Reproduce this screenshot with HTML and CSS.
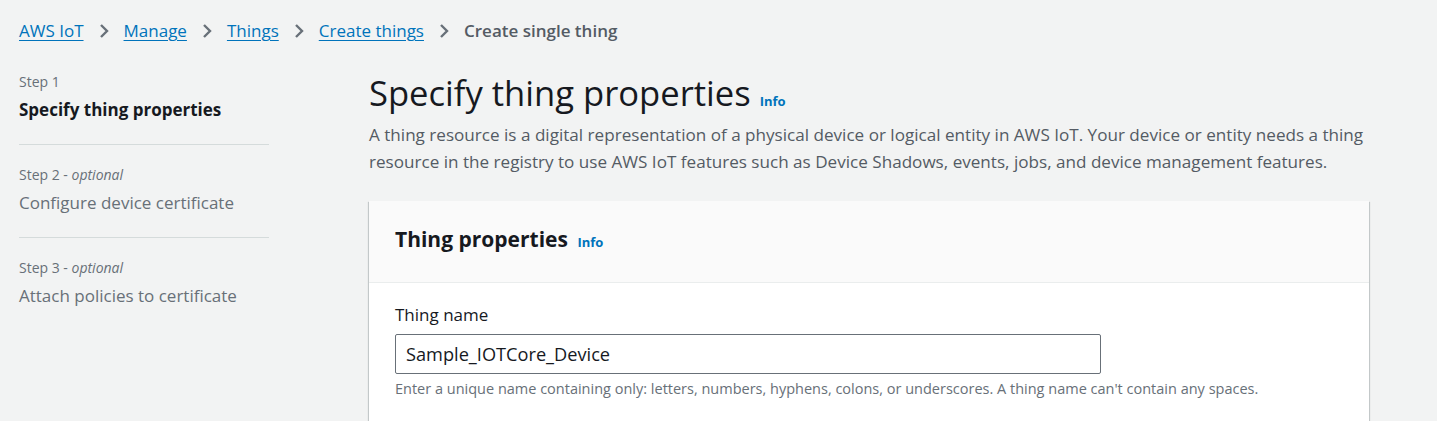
FILE: index.html
```html
<!DOCTYPE html>
<html>

<head>
  <title>Create single thing</title>
  <link rel="stylesheet" href="styles.css">
</head>

<body>
  <nav class="breadcrumbs">
    <a class="crumb-link" href="#">AWS IoT</a>
    <svg class="crumb-sep" viewBox="0 0 10 16" width="10" height="16"><path d="M2 2l6 6-6 6" fill="none" stroke="#687078" stroke-width="2.4"/></svg>
    <a class="crumb-link" href="#">Manage</a>
    <svg class="crumb-sep" viewBox="0 0 10 16" width="10" height="16"><path d="M2 2l6 6-6 6" fill="none" stroke="#687078" stroke-width="2.4"/></svg>
    <a class="crumb-link" href="#">Things</a>
    <svg class="crumb-sep" viewBox="0 0 10 16" width="10" height="16"><path d="M2 2l6 6-6 6" fill="none" stroke="#687078" stroke-width="2.4"/></svg>
    <a class="crumb-link" href="#">Create things</a>
    <svg class="crumb-sep" viewBox="0 0 10 16" width="10" height="16"><path d="M2 2l6 6-6 6" fill="none" stroke="#687078" stroke-width="2.4"/></svg>
    <span class="crumb-current">Create single thing</span>
  </nav>

  <div class="layout">
    <!-- Wizard steps -->
    <ul class="steps">
      <li class="step">
        <div class="step-number">Step 1</div>
        <div class="step-title active">Specify thing properties</div>
      </li>
      <li class="step">
        <div class="step-number">Step 2 - <i>optional</i></div>
        <div class="step-title">Configure device certificate</div>
      </li>
      <li class="step">
        <div class="step-number">Step 3 - <i>optional</i></div>
        <div class="step-title">Attach policies to certificate</div>
      </li>
    </ul>

    <main class="content">
      <h1 class="page-title">Specify thing properties <a class="info-link" href="#">Info</a></h1>
      <p class="page-desc">A thing resource is a digital representation of a physical device or logical entity in AWS IoT. Your device or entity needs a thing resource in the registry to use AWS IoT features such as Device Shadows, events, jobs, and device management features.</p>

      <section class="card">
        <div class="card-header">
          <h2 class="card-title">Thing properties <a class="info-link" href="#">Info</a></h2>
        </div>
        <div class="card-body">
          <label class="field-label" for="thingName">Thing name</label>
          <input class="field-input" id="thingName" type="text" value="Sample_IOTCore_Device">
          <div class="field-hint">Enter a unique name containing only: letters, numbers, hyphens, colons, or underscores. A thing name can't contain any spaces.</div>
        </div>
      </section>
    </main>
  </div>
</body>

</html>
```

FILE: styles.css
```css
/* styles.css */
body {
  margin: 0;
  font-family: "Open Sans", "Noto Sans", sans-serif;
  color: #16191f;
  background-color: #f2f3f3;
}

/* Breadcrumbs */
.breadcrumbs {
  display: flex;
  align-items: center;
  gap: 11px;
  padding: 20px 19px 0;
  height: 22px;
  font-size: 17px;
  line-height: 22px;
}

.crumb-link {
  color: #0073bb;
  text-decoration: underline;
  text-underline-offset: 3px;
}

.crumb-sep {
  display: block;
  margin: 0 4px;
}

.crumb-current {
  color: #545b64;
  font-weight: 600;
}

/* Layout */
.layout {
  display: flex;
  padding: 0 19px;
  margin-top: 30px;
}

/* Steps */
.steps {
  list-style: none;
  margin: 0 100px 0 0;
  padding: 0;
  width: 250px;
  flex-shrink: 0;
}

.step {
  padding: 20px 0 22px;
  border-bottom: 1px solid #d5dbdb;
}

.step:first-child {
  padding-top: 0;
}

.step:last-child {
  border-bottom: none;
}

.step-number {
  font-size: 14px;
  line-height: 20px;
  color: #687078;
}

.step-title {
  margin-top: 6px;
  font-size: 17px;
  line-height: 24px;
  color: #687078;
}

.step-title.active {
  color: #16191f;
  font-weight: 700;
}

/* Content */
.content {
  width: 1000px;
}

.page-title {
  margin: 0;
  font-size: 34.6px;
  font-weight: 400;
  line-height: 42px;
}

.info-link {
  color: #0073bb;
  font-size: 13px;
  font-weight: 700;
  text-decoration: none;
  margin-left: 0;
}

.page-desc {
  margin: -1px 0 0;
  font-size: 17.1px;
  line-height: 27px;
  color: #545b64;
}

/* Card */
.card {
  margin-top: 26px;
  background-color: #ffffff;
  box-shadow: 0 1px 1px 0 rgba(0, 28, 36, 0.3), 1px 1px 1px 0 rgba(0, 28, 36, 0.15), -1px 1px 1px 0 rgba(0, 28, 36, 0.15);
}

.card-header {
  background-color: #fafafa;
  border-bottom: 1px solid #eaeded;
  padding: 23px 26px 25px;
}

.card-title {
  margin: 0;
  font-size: 21px;
  font-weight: 700;
  line-height: 30px;
}

.card-title .info-link {
  margin-left: 4px;
}

.card-body {
  padding: 20px 26px 22px;
}

.field-label {
  display: block;
  font-size: 17px;
  line-height: 24px;
}

.field-input {
  display: block;
  box-sizing: border-box;
  margin-top: 7px;
  width: 706px;
  height: 40px;
  padding: 0 10px;
  border: 1px solid #687078;
  border-radius: 2px;
  font-family: inherit;
  font-size: 18.2px;
  color: #16191f;
}

.field-hint {
  margin-top: 5px;
  font-size: 14.5px;
  line-height: 20px;
  color: #687078;
}
```
